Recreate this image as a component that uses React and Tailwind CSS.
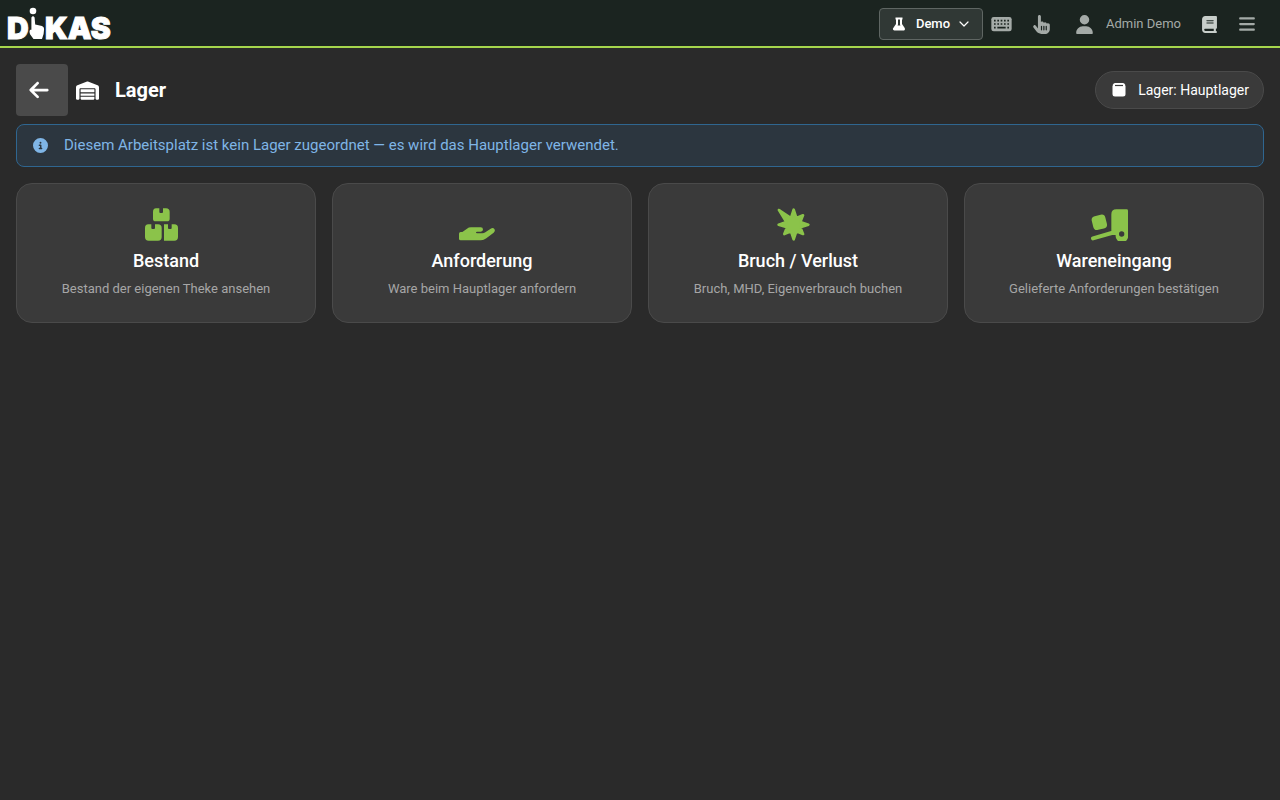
import { FaArrowLeft, FaBars, FaBook, FaCircleInfo, FaHandPointer, FaUser, FaWarehouse } from 'react-icons/fa6'

function BoxesIcon() {
  return (
    <svg width="33" height="33" viewBox="0 0 99 99" fill="currentColor" aria-hidden="true">
      <path d="M33 1h10v11q0 3 3 3h5q3 0 3-3V1h9q11 0 11 11v20q0 8-8 8H32q-8 0-8-8V12Q24 1 33 1z" />
      <path d="M10 49h9v11q0 3 3 3h5q3 0 3-3V49h9q11 0 11 11v27q0 11-11 11H11Q0 98 0 87V60q0-11 10-11z" />
      <path d="M57 49h12v11q0 3 3 3h5q3 0 3-3V49h8q11 0 11 11v27q0 11-11 11H57z" />
    </svg>
  )
}

function HandIcon() {
  return (
    <svg width="36" height="33" viewBox="0 0 108 99" fill="currentColor" aria-hidden="true">
      <path d="M0 77q0-5 5-5h5l14-10q5-4 12-4h29q7 0 7 6.500T65 71H54q-3 0-3 2.500t3 2.500h16q5 0 9-3l16-11q7-4 11 1 4 6-2 11L82 91q-8 6-16 6H5q-5 0-5-5z" />
    </svg>
  )
}

function BurstIcon() {
  return (
    <svg width="33" height="33" viewBox="0 0 99 99" fill="currentColor" stroke="currentColor" strokeWidth="8" strokeLinejoin="round" aria-hidden="true">
      <path d="M50 5 58 30 78 22 70 42 94 50 70 58 78 78 58 70 50 94 42 70 22 78 30 58 5 50 28 42 6 6 42 30z" />
    </svg>
  )
}

function RampIcon() {
  return (
    <svg width="37" height="33" viewBox="0 0 111 99" fill="currentColor" aria-hidden="true">
      <rect x="4" y="22" width="42" height="42" rx="12" transform="rotate(-14 25 43)" />
      <path d="M6 91 62 75H76" fill="none" stroke="currentColor" strokeWidth="12" strokeLinecap="round" strokeLinejoin="round" />
      <path fillRule="evenodd" d="M76 4h31q4 0 4 4v70a19 19 0 1 1-37 3H61V19Q61 4 76 4zm16 66a8 8 0 1 0 0 16 8 8 0 0 0 0-16z" />
    </svg>
  )
}

function KeyboardIcon() {
  return (
    <svg width="21" height="18" viewBox="0 0 63 54" aria-hidden="true">
      <rect x="1" y="6" width="61" height="43" rx="7" fill="currentColor" />
      <g stroke="#1b2420" strokeWidth="5">
        <path d="M9 17h45M9 27h45" strokeDasharray="5 5" />
        <path d="M9 38h5M49 38h5M19 38h25" />
      </g>
    </svg>
  )
}

const tiles = [
  { icon: BoxesIcon, title: 'Bestand', text: 'Bestand der eigenen Theke ansehen' },
  { icon: HandIcon, title: 'Anforderung', text: 'Ware beim Hauptlager anfordern' },
  { icon: BurstIcon, title: 'Bruch / Verlust', text: 'Bruch, MHD, Eigenverbrauch buchen' },
  { icon: RampIcon, title: 'Wareneingang', text: 'Gelieferte Anforderungen bestätigen' },
]

function Logo() {
  return (
    <svg className="w-28 h-12 overflow-visible" viewBox="0 0 112 48" fill="#fff" role="img" aria-label="DIKAS">
      <g className="font-['Inter'] font-black" fontSize="30" stroke="#fff">
        <text x="7" y="40">D</text>
        <text x="45" y="40">KAS</text>
      </g>
      <circle cx="33" cy="12" r="3.3" />
      <path d="M31.4 18.500q1.600-2.600 3.200 0l.6 7 6.800 1.500q2.200.8 2.100 3l-.5 5-1.600 5H33.500L30.200 35.500q-1.400-3.500.1-4.800l1.100.1z" />
    </svg>
  )
}

function Header() {
  return (
    <header className="h-12 flex items-center justify-between pr-6 bg-[#1b2420] border-b-2 border-[#a5d64c] text-[#a4aaa7]">
      <Logo />
      <div className="flex items-center pt-0.5">
        <button className="h-8 w-[104px] flex items-center justify-center gap-2 rounded border border-[#5f6663] bg-[#303835] text-white text-[13px] font-medium">
          <svg className="size-3.5 mr-0.5" viewBox="0 0 14 14" fill="currentColor" aria-hidden="true">
            <path fillRule="evenodd" d="M3.5.5h7v2H10V7l2.700 4q.8 1.300-.3 2.300-.3.2-.8.2H2.400q-1.500-.2-1.500-1.500 0-.5.4-1L4 7V2.500h-.5zM6 2.500V7.500L5.500 8.500h3L8 7.500v-5z" />
          </svg>
          Demo
          <svg className="size-3" viewBox="0 0 12 12" fill="none" stroke="currentColor" strokeWidth="1.2" strokeLinecap="round" strokeLinejoin="round" aria-hidden="true">
            <path d="m2 4 4 4 4-4" />
          </svg>
        </button>
        <button className="ml-2" aria-label="Tastatur"><KeyboardIcon /></button>
        <button className="ml-5" aria-label="Touch"><FaHandPointer size={19} /></button>
        <button className="ml-6 flex items-center gap-3 text-[13px]">
          <FaUser size={19} />
          Admin Demo
        </button>
        <button className="ml-5 text-[#c8ceca]" aria-label="Handbuch"><FaBook size={17} /></button>
        <button className="ml-5" aria-label="Menü"><FaBars size={18} /></button>
      </div>
    </header>
  )
}

export default function App() {
  return (
    <div className="min-h-screen bg-[#2a2a2a] text-white font-['Roboto',sans-serif]">
      <Header />
      <main className="p-4">
        <div className="flex items-center justify-between">
          <div className="flex items-center">
            <button className="size-[52px] pl-3 rounded bg-[#4a4a4a]" aria-label="Zurück">
              <FaArrowLeft size={22} />
            </button>
            <FaWarehouse size={23} className="ml-2" />
            <h1 className="ml-4 text-xl font-bold">Lager</h1>
          </div>
          <button className="h-[38px] flex items-center gap-2.5 px-3.5 rounded-full border border-[#4a4a4a] bg-[#3a3a3a] text-sm">
            <svg className="size-[18px]" viewBox="0 0 18 18" fill="#fff" aria-hidden="true">
              <path d="M5 2h8q1.500 0 2 1.500l.5 2V13q0 2.500-2.500 2.500H5Q2.500 15.500 2.500 13V5.500l.5-2Q3.500 2 5 2z" />
              <path d="M5 4.500h8" stroke="#3a3a3a" strokeWidth="1.2" />
            </svg>
            Lager: Hauptlager
          </button>
        </div>
        <div className="mt-2 h-[43px] flex items-center gap-4 px-4 rounded-lg border border-[#2f6690] bg-[#2c363f] text-[#7fb5e6] text-[15px]">
          <FaCircleInfo size={15} />
          Diesem Arbeitsplatz ist kein Lager zugeordnet — es wird das Hauptlager verwendet.
        </div>
        <div className="mt-4 grid grid-cols-4 gap-4">
          {tiles.map(({ icon: Icon, title, text }) => (
            <button key={title} className="h-[140px] flex flex-col items-center justify-center rounded-2xl border border-[#4a4a4a] bg-[#3a3a3a]">
              <span className="mr-2.5 text-[#8bc34a]"><Icon /></span>
              <span className="mt-1.5 text-lg font-medium">{title}</span>
              <span className="mt-1 text-[13px] text-[#a6a6a6]">{text}</span>
            </button>
          ))}
        </div>
      </main>
    </div>
  )
}
